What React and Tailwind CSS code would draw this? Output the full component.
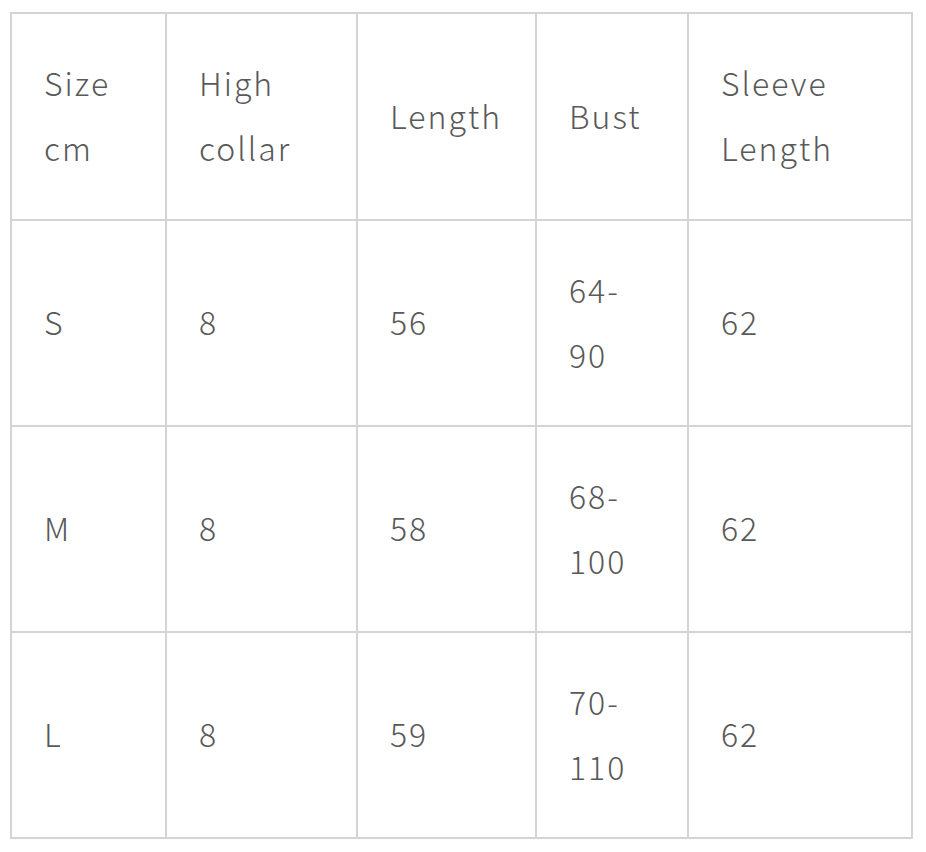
// App.jsx
const header = ["Size cm", "High collar", "Length", "Bust", "Sleeve Length"];

const rows = [
  ["S", "8", "56", "64-90", "62"],
  ["M", "8", "58", "68-100", "62"],
  ["L", "8", "59", "70-110", "62"],
];

const widths = ["w-[155px]", "w-[191px]", "w-[179px]", "w-[152px]", "w-[224px]"];

function Cell({ children }) {
  return (
    <td className="border-2 border-[#d4d4d4] pl-[32px] pr-[30px] pb-[3px] align-middle text-[32px] leading-[65px] tracking-[2px] text-[#595959] font-light">
      {children}
    </td>
  );
}

export default function App() {
  return (
    <div className="bg-white min-h-screen pt-[12px] pl-[10px] font-['Noto_Sans_CJK_SC','Noto_Sans',sans-serif]">
      <table className="table-fixed border-collapse w-[903px]">
        <colgroup>
          {widths.map((w, i) => (
            <col key={i} className={w} />
          ))}
        </colgroup>
        <tbody>
          <tr className="h-[207px]">
            {header.map((h, i) => (
              <Cell key={i}>{h}</Cell>
            ))}
          </tr>
          {rows.map((r, i) => (
            <tr key={i} className="h-[206px]">
              {r.map((c, j) => (
                <Cell key={j}>{c}</Cell>
              ))}
            </tr>
          ))}
        </tbody>
      </table>
    </div>
  );
}
